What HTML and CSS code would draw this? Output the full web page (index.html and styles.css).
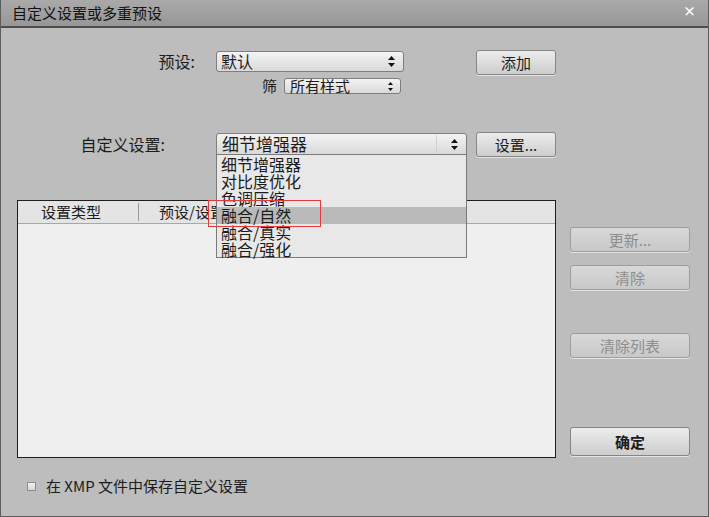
FILE: index.html
```html
<!DOCTYPE html>
<html lang="zh-CN">
<head>
    <meta charset="UTF-8">
    <meta name="viewport" content="width=device-width, initial-scale=1.0">
    <link rel="stylesheet" href="styles.css">
    <title>自定义设置或多重预设</title>
</head>
<body>
    <div class="dialog">
        <header class="titlebar">
            <span class="title">自定义设置或多重预设</span>
            <span class="close">×</span>
        </header>
        <div class="content">
            <main class="main">
                <div class="row row-preset">
                    <label class="label">预设:</label>
                    <div class="select select-preset">
                        <span class="select-text">默认</span>
                        <svg class="arrows" width="7" height="11" viewBox="0 0 7 11"><path d="M3.5 0 L7 4 L0 4 Z M0 7 L7 7 L3.5 11 Z" fill="#111"/></svg>
                    </div>
                    <button class="btn btn-add">添加</button>
                </div>
                <div class="row row-filter">
                    <span class="filter-label">筛</span>
                    <div class="select select-filter">
                        <span class="select-text">所有样式</span>
                        <svg class="arrows" width="5" height="9" viewBox="0 0 5 9"><path d="M2.5 0 L5 3 L0 3 Z M0 6 L5 6 L2.5 9 Z" fill="#111"/></svg>
                    </div>
                </div>
                <div class="row row-custom">
                    <label class="label label-custom">自定义设置:</label>
                    <div class="select-wrap">
                        <div class="select select-custom">
                            <span class="select-text">细节增强器</span>
                            <span class="select-sep"></span>
                            <svg class="arrows" width="7" height="11" viewBox="0 0 7 11"><path d="M3.5 0 L7 4 L0 4 Z M0 7 L7 7 L3.5 11 Z" fill="#111"/></svg>
                        </div>
                        <ul class="dropdown">
                            <li>细节增强器</li>
                            <li>对比度优化</li>
                            <li>色调压缩</li>
                            <li class="active">融合/自然</li>
                            <li>融合/真实</li>
                            <li>融合/强化</li>
                            <span class="mark"></span>
                        </ul>
                    </div>
                    <button class="btn btn-setup">设置...</button>
                </div>
                <div class="table">
                    <div class="thead">
                        <div class="th th-type">设置类型</div>
                        <div class="th th-preset">预设/设置</div>
                    </div>
                    <div class="tbody"></div>
                </div>
                <div class="check-row">
                    <span class="checkbox"></span>
                    <span class="check-text">在 XMP 文件中保存自定义设置</span>
                </div>
            </main>
            <aside class="side">
                <button class="btn side-btn disabled">更新...</button>
                <button class="btn side-btn disabled btn-clear">清除</button>
                <button class="btn side-btn disabled btn-clear-list">清除列表</button>
                <button class="btn side-btn btn-ok">确定</button>
            </aside>
        </div>
    </div>
</body>
</html>
```

FILE: styles.css
```css
* { box-sizing: border-box; }
body { margin: 0; background: #bdbdbd; }

.dialog {
    width: 709px;
    height: 517px;
    background: #bdbdbd;
    border: 1px solid #5c5c5c;
    border-top: none;
    font-family: "Noto Sans CJK SC", "Liberation Sans", sans-serif;
    color: #1c1c1c;
    overflow: hidden;
}

/* title bar */
.titlebar {
    height: 28px;
    display: flex;
    align-items: center;
    justify-content: space-between;
    padding: 0 12px 2px 11px;
    background: linear-gradient(#a9a9a9, #979797);
    border-bottom: 2px solid #4e4e4e;
}
.title { font-size: 15px; color: #111; }
.close { color: #fff; font-weight: bold; font-size: 13px; margin-top: -4px; }

.content {
    display: flex;
    padding-left: 16px;
}
.main {
    width: 539px;
    display: flex;
    flex-direction: column;
}
.row { display: flex; align-items: flex-start; }

.label {
    width: 199px;
    text-align: right;
    font-size: 16px;
    line-height: 22px;
    padding-right: 21px;
}
.row-preset { margin-top: 22px; }
.label-custom { padding-right: 51px; margin-top: 1px; }

/* selects */
.select {
    display: flex;
    align-items: center;
    border: 1px solid #7e7e7e;
    border-radius: 3px;
    background: linear-gradient(#f4f4f4, #d9d9d9);
    padding: 0 8px 0 4px;
}
.select-text { flex: 1; white-space: nowrap; }
.select-preset { width: 188px; height: 21px; margin-top: 1px; font-size: 16px; line-height: 19px; }
.select-filter { width: 117px; height: 16px; font-size: 15px; line-height: 14px; padding: 0 7px 0 5px; }
.select-wrap { position: relative; width: 251px; margin-top: 1px; }
.select-custom {
    width: 251px;
    height: 22px;
    font-size: 17px;
    line-height: 20px;
    border-radius: 3px 3px 0 0;
    padding: 0 8px 0 5px;
}
.select-sep {
    width: 1px;
    height: 18px;
    background: #d2d2d2;
    margin-right: 14px;
}

.row-filter { margin-top: 3px; padding-left: 245px; align-items: center; height: 16px; }
.filter-label { font-size: 15px; line-height: 16px; width: 22px; }

.row-custom { margin-top: 38px; }

/* buttons */
.btn {
    font-family: "Noto Sans CJK SC", "Liberation Sans", sans-serif;
    font-size: 15px;
    color: #1c1c1c;
    border: 1px solid #868686;
    border-radius: 3px;
    background: linear-gradient(#ececec, #cdcdcd);
    box-shadow: 0 1px 0 #e4e4e4;
    padding: 0;
    line-height: 1;
}
.btn-add { width: 80px; height: 25px; margin-left: 72px; }
.btn-setup { width: 80px; height: 25px; margin-left: 9px; }

/* dropdown list */
.dropdown {
    position: absolute;
    top: 21px;
    left: 0;
    width: 251px;
    height: 104px;
    margin: 0;
    padding: 1px 0 0 0;
    list-style: none;
    background: #e8e8e8;
    border: 1px solid #7a7a7a;
    z-index: 2;
}
.dropdown li {
    font-size: 16px;
    line-height: 17px;
    height: 17px;
    padding-left: 4px;
    white-space: nowrap;
}
.dropdown li.active { background: #bababa; }
.mark {
    position: absolute;
    left: -9px;
    top: 45px;
    width: 113px;
    height: 27px;
    border: 1px solid #e23a3a;
}

/* table */
.table {
    margin-top: 43px;
    height: 258px;
    border: 1px solid #1e1e1e;
    background: #efefef;
    display: flex;
    flex-direction: column;
}
.thead {
    display: flex;
    height: 23px;
    background: #e4e4e4;
    border-bottom: 1px solid #a8a8a8;
    font-size: 15px;
    line-height: 22px;
}
.th-type { width: 121px; padding-left: 23px; border-right: 1px solid #9a9a9a; margin: 2px 0; line-height: 18px; }
.th-preset { padding-left: 20px; }
.tbody { flex: 1; }

.check-row {
    display: flex;
    align-items: center;
    margin-top: 19px;
    padding-left: 10px;
    font-size: 15px;
    line-height: 18px;
}
.checkbox {
    width: 9px;
    height: 9px;
    border: 1px solid #8c8c8c;
    background: linear-gradient(#f2f2f2, #d6d6d6);
    margin-right: 10px;
}

/* right column */
.side {
    width: 120px;
    margin-left: 14px;
    padding-top: 199px;
    display: flex;
    flex-direction: column;
}
.side-btn { width: 120px; height: 25px; }
.side-btn.disabled {
    color: #8e8e8e;
    border-color: #9e9e9e;
    background: linear-gradient(#d8d8d8, #c8c8c8);
}
.btn-clear { margin-top: 13px; }
.btn-clear-list { margin-top: 43px; }
.btn-ok { height: 29px; margin-top: 69px; font-weight: bold; }
```
